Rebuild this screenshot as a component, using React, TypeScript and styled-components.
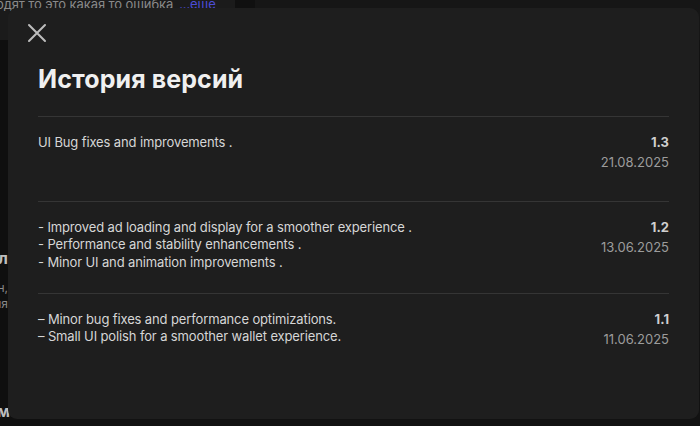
import React from "react";
import styled, { createGlobalStyle } from "styled-components";

const Global = createGlobalStyle`
  html, body { margin: 0; padding: 0; }
  body {
    background: #121212;
    font-family: Inter, "Noto Sans", "Liberation Sans", sans-serif;
    width: 700px;
    height: 426px;
    overflow: hidden;
  }
`;

const Page = styled.div`
  position: relative;
  width: 700px;
  height: 426px;
  overflow: hidden;
  display: grid;
  grid-template-columns: 235px 20px 1fr;
  grid-template-rows: 40px 1fr;
`;

const TopCard = styled.div`
  grid-column: 1 / 2;
  grid-row: 1 / 2;
  background: #1b1b1b;
  display: flex;
  align-items: flex-start;
  margin-left: -4px;
  overflow: hidden;
`;

const TopText = styled.p`
  margin: -6px 0 0 0;
  font-size: 13px;
  line-height: 20px;
  color: #8a8a8a;
  white-space: nowrap;
  letter-spacing: -0.1px;
  span { color: #4d4dd6; margin-left: 6px; }
`;

const Gutter = styled.div`
  grid-column: 2 / 3;
  grid-row: 1 / 2;
  background: #101010;
`;

const TopRight = styled.div`
  grid-column: 3 / 4;
  grid-row: 1 / 2;
  background: #161616;
`;

const SideCol = styled.div`
  grid-column: 1 / 2;
  grid-row: 2 / 3;
  background: #0f0f0f;
  display: flex;
  flex-direction: column;
  margin-left: -200px;
  width: 240px;
  padding-top: 208px;
  color: #9a9a9a;
`;

const SideHead = styled.div`
  font-size: 16px;
  font-weight: 700;
  color: #bdbdbd;
  text-align: right;
  padding-right: 32px;
  line-height: 20px;
`;

const SideSmall = styled.div`
  font-size: 12px;
  line-height: 16px;
  text-align: right;
  padding-right: 32px;
  margin-top: 12px;
  color: #8a8a8a;
`;

const SideBottom = styled.div`
  font-size: 16px;
  font-weight: 700;
  color: #bdbdbd;
  line-height: 18px;
  text-align: right;
  padding-right: 30px;
  margin-top: 90px;
`;

const Modal = styled.div`
  position: absolute;
  left: 8px;
  top: 8px;
  width: 691px;
  height: 411px;
  background: #1e1e1e;
  border-radius: 9px;
  box-sizing: border-box;
  padding: 14px 30px 0 30px;
  display: flex;
  flex-direction: column;
`;

const CloseButton = styled.button`
  width: 22px;
  height: 22px;
  padding: 0;
  margin: 0 0 0 -12px;
  border: none;
  background: transparent;
  display: flex;
  align-items: center;
  justify-content: center;
  cursor: pointer;
`;

const Title = styled.h1`
  margin: 20px 0 0 0;
  font-size: 25px;
  line-height: 30px;
  font-weight: 700;
  color: #f0f0f0;
  letter-spacing: 0.1px;
`;

const List = styled.div`
  margin-top: 22px;
  display: flex;
  flex-direction: column;
`;

const Entry = styled.div<{ $bottom: number }>`
  border-top: 1px solid #353535;
  padding: 15px 0 ${(p) => p.$bottom}px 0;
  display: flex;
  justify-content: space-between;
  align-items: flex-start;
`;

const Notes = styled.div`
  display: flex;
  flex-direction: column;
  padding-top: 1.5px;
  font-size: 13px;
  line-height: 17.5px;
  letter-spacing: -0.13px;
  color: #d6d6d6;
`;

const Meta = styled.div`
  display: flex;
  flex-direction: column;
  align-items: flex-end;
  padding-bottom: 5px;
`;

const Version = styled.div`
  font-size: 13px;
  line-height: 20px;
  font-weight: 700;
  color: #cfcfcf;
`;

const DateText = styled.div`
  font-size: 13px;
  line-height: 20px;
  color: #9c9c9c;
`;

const entries = [
  { v: "1.3", d: "21.08.2025", notes: ["UI Bug fixes and improvements ."], bottom: 24 },
  {
    v: "1.2",
    d: "13.06.2025",
    notes: [
      "- Improved ad loading and display for a smoother experience .",
      "- Performance and stability enhancements .",
      "- Minor UI and animation improvements .",
    ],
    bottom: 22,
  },
  {
    v: "1.1",
    d: "11.06.2025",
    notes: [
      "– Minor bug fixes and performance optimizations.",
      "– Small UI polish for a smoother wallet experience.",
    ],
    bottom: 24,
  },
];

export default function App() {
  return (
    <>
      <Global />
      <Page>
        <TopCard>
          <TopText>
            одят то это какая то ошибка<span>...еще</span>
          </TopText>
        </TopCard>
        <Gutter />
        <TopRight />
        <SideCol>
          <SideHead>Детал</SideHead>
          <SideSmall>
            Описание приложен,
            <br />
            информация
          </SideSmall>
          <SideBottom>
            Систем
            <br />
            информацию
          </SideBottom>
        </SideCol>
        <Modal>
          <CloseButton aria-label="Закрыть">
            <svg width="20" height="20" viewBox="0 0 20 20">
              <path d="M2 2 L18 18 M18 2 L2 18" stroke="#bdbdbd" strokeWidth="2" strokeLinecap="round" />
            </svg>
          </CloseButton>
          <Title>История версий</Title>
          <List>
            {entries.map((e) => (
              <Entry key={e.v} $bottom={e.bottom}>
                <Notes>
                  {e.notes.map((n) => (
                    <div key={n}>{n}</div>
                  ))}
                </Notes>
                <Meta>
                  <Version>{e.v}</Version>
                  <DateText>{e.d}</DateText>
                </Meta>
              </Entry>
            ))}
          </List>
        </Modal>
      </Page>
    </>
  );
}
